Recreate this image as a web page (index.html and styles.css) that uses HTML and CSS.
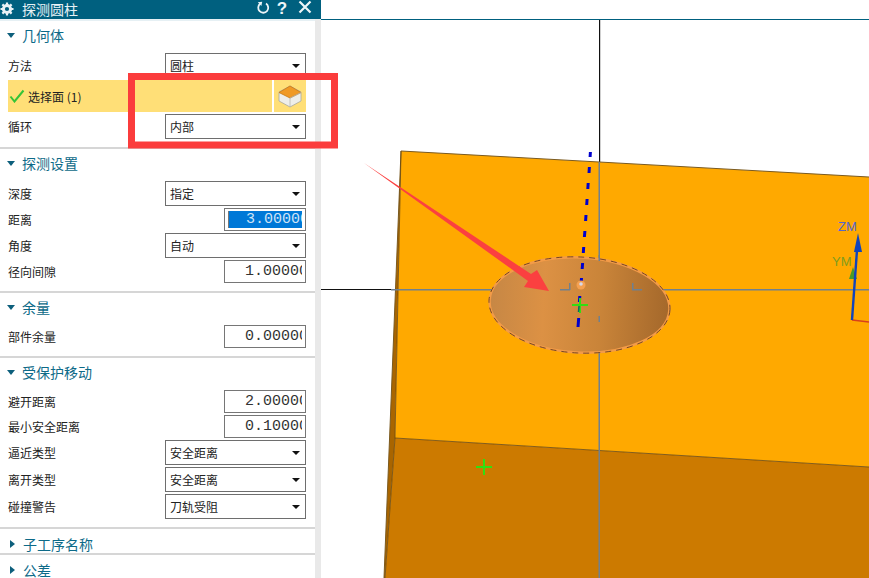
FILE: index.html
```html
<!DOCTYPE html>
<html lang="zh">
<head>
<meta charset="utf-8">
<title>探测圆柱</title>
<link rel="stylesheet" href="styles.css">
</head>
<body>
<div class="app">
  <aside class="panel">
    <header class="titlebar">
      <svg class="gear" viewBox="0 0 14 14" width="14" height="14">
        <circle cx="7" cy="7" r="3.6" fill="none" stroke="#e8f2f6" stroke-width="3"/>
        <path d="M7 0.5V3M7 11V13.5M0.5 7H3M11 7H13.5M2.4 2.4L4.2 4.2M9.8 9.8L11.6 11.6M2.4 11.6L4.2 9.8M9.8 4.2L11.6 2.4" stroke="#e8f2f6" stroke-width="2.2"/>
      </svg>
      <span class="title-text">探测圆柱</span>
      <svg class="tb-icon" viewBox="0 0 14 14" width="14" height="14">
        <path d="M4.2 2.8A5 5 0 1 0 10 2.6" fill="none" stroke="#eef5f8" stroke-width="1.8"/>
        <path d="M1.8 1.2L6.2 0.8L5.4 5Z" fill="#eef5f8"/>
      </svg>
      <span class="tb-help">?</span>
      <svg class="tb-close" viewBox="0 0 14 14" width="14" height="14">
        <path d="M1.5 1.5L12.5 12.5M12.5 1.5L1.5 12.5" stroke="#eef5f8" stroke-width="2.2"/>
      </svg>
    </header>
    <div class="sheet">
      <section class="group group-first">
        <h2 class="group-head"><i class="caret-down"></i>几何体</h2>
        <div class="rows">
          <div class="row"><span class="label">方法</span><div class="select">圆柱<i class="arrow"></i></div></div>
          <div class="row-pick">
            <div class="pick-main">
              <svg class="check" viewBox="0 0 16 14" width="16" height="14"><path d="M1.5 7.5L5.5 12.5L14.5 1.5" fill="none" stroke="#35c437" stroke-width="2"/></svg>
              <span class="pick-text">选择面 (1)</span>
            </div>
            <div class="pick-btn">
              <svg viewBox="0 0 24 24" width="24" height="24">
                <path d="M12 2L23 8V17L12 23L1 17V8Z" fill="#eeeeea" stroke="#a8a8a0" stroke-width="0.8"/>
                <path d="M12 2L23 8.5L12 14L1 8.5Z" fill="#f09a26" stroke="#c87810" stroke-width="0.8"/>
                <path d="M12 14V23M12 14L23 8.5" stroke="#b8b8b0" stroke-width="0.8" fill="none"/>
              </svg>
            </div>
          </div>
          <div class="row"><span class="label">循环</span><div class="select">内部<i class="arrow"></i></div></div>
        </div>
      </section>
      <section class="group">
        <h2 class="group-head"><i class="caret-down"></i>探测设置</h2>
        <div class="rows">
          <div class="row"><span class="label">深度</span><div class="select">指定<i class="arrow"></i></div></div>
          <div class="row row-input"><span class="label">距离</span><div class="num num-active"><span>3.00000</span></div></div>
          <div class="row"><span class="label">角度</span><div class="select">自动<i class="arrow"></i></div></div>
          <div class="row row-input"><span class="label">径向间隙</span><div class="num"><span>1.00000</span></div></div>
        </div>
      </section>
      <section class="group">
        <h2 class="group-head"><i class="caret-down"></i>余量</h2>
        <div class="rows">
          <div class="row row-input"><span class="label">部件余量</span><div class="num"><span>0.00000</span></div></div>
        </div>
      </section>
      <section class="group">
        <h2 class="group-head"><i class="caret-down"></i>受保护移动</h2>
        <div class="rows">
          <div class="row row-input"><span class="label">避开距离</span><div class="num"><span>2.00000</span></div></div>
          <div class="row row-input"><span class="label">最小安全距离</span><div class="num"><span>0.10000</span></div></div>
          <div class="row"><span class="label">逼近类型</span><div class="select">安全距离<i class="arrow"></i></div></div>
          <div class="row"><span class="label">离开类型</span><div class="select">安全距离<i class="arrow"></i></div></div>
          <div class="row"><span class="label">碰撞警告</span><div class="select">刀轨受阻<i class="arrow"></i></div></div>
        </div>
      </section>
      <section class="group group-closed">
        <h2 class="group-head"><i class="caret-right"></i>子工序名称</h2>
      </section>
      <section class="group group-closed">
        <h2 class="group-head"><i class="caret-right"></i>公差</h2>
      </section>
    </div>
  </aside>
  <main class="viewport">
    <svg class="scene" viewBox="321 0 548 578" width="548" height="578">
      <defs>
        <linearGradient id="hole" x1="0" x2="1" y1="0" y2="0">
          <stop offset="0" stop-color="#c68745"/>
          <stop offset="0.3" stop-color="#dc9144"/>
          <stop offset="0.62" stop-color="#c98439"/>
          <stop offset="1" stop-color="#a4682b"/>
        </linearGradient>
      </defs>
      <rect x="321" y="19" width="548" height="1" fill="#00607f"/>
      <rect x="321" y="289" width="71" height="1" fill="#111"/>
      <rect x="599" y="20" width="1.2" height="143" fill="#111"/>
      <polygon points="401,151 395,438 385,578 384,578" fill="#a96500"/>
      <polygon points="401,151 869,177 869,467 395,438" fill="#ffa900"/>
      <polygon points="395,438 869,467 869,578 385,578" fill="#cc7a00"/>
      <path d="M384 578L401 151L869 177" fill="none" stroke="#7a5a20" stroke-width="1"/>
      <path d="M401 151L395 438L385 578M395 438L869 467" fill="none" stroke="#6a4a10" stroke-width="0.8"/>
      <rect class="guide" x="391" y="289" width="179" height="1.5"/>
      <rect class="guide" x="632" y="289" width="237" height="1.5"/>
      <rect class="guide" x="598.5" y="162" width="1.5" height="96"/>
      <rect class="guide" x="598.5" y="320" width="1.5" height="258"/>
      <g transform="rotate(3 579.5 305)">
        <ellipse cx="579.5" cy="305" rx="90" ry="47.5" fill="url(#hole)" stroke="#f39b48" stroke-width="2.4"/>
        <ellipse cx="579.5" cy="305" rx="90.6" ry="48" fill="none" stroke="#5a3418" stroke-width="0.8" stroke-dasharray="6 5"/>
      </g>
      <rect class="guide" x="598.5" y="255" width="1.5" height="6"/>
      <rect class="guide" x="598.5" y="316" width="1.5" height="6"/>
      <rect class="guide" x="569" y="283" width="1.5" height="7"/>
      <rect class="guide" x="632" y="283" width="1.5" height="7"/>
      <rect class="guide" x="560" y="289" width="10" height="1.5"/>
      <rect class="guide" x="632" y="289" width="10" height="1.5"/>
      <path d="M590.4 152L590.1 157M589.4 167L589 173M588.2 183L587.8 189M587.1 199L586.7 205M586 215L585.6 221M584.9 231L584.4 237M583.7 247L583.3 253M582.6 263L582.2 269M581.5 278L581.1 284M579.8 296L579.4 302M578.7 318L578 327" fill="none" stroke="#0000cc" stroke-width="3"/>
      <circle cx="581" cy="285" r="4.5" fill="#f4a050"/>
      <circle cx="581" cy="284" r="1.8" fill="#d8d8e8"/>
      <path d="M572 305H588M580 298V313" stroke="#33dd11" stroke-width="2"/>
      <line x1="579" y1="306" x2="578.5" y2="312" stroke="#0d6a60" stroke-width="1.5"/>
      <path d="M476 467H492M484 459V475" stroke="#33dd11" stroke-width="2"/>
      <line x1="852" y1="320" x2="869" y2="322" stroke="#d8401c" stroke-width="1.5"/>
      <path d="M853 267L849 279H857Z" fill="#4a9a28"/>
      <line x1="852" y1="320" x2="857" y2="250" stroke="#1144bb" stroke-width="2.4"/>
      <path d="M858 233L854 252H862Z" fill="#1144bb"/>
      <text class="axis axis-z" x="838" y="231">ZM</text>
      <text class="axis axis-y" x="832" y="266">YM</text>
    </svg>
  </main>
  <svg class="markup" viewBox="0 0 869 578" width="869" height="578">
    <rect x="131.5" y="76.5" width="203" height="68.5" fill="none" stroke="#fb3c3c" stroke-width="7"/>
    <polygon points="364,163 531,274 537,270 549,291 524,287 528,281" fill="#fb4040"/>
  </svg>
</div>
</body>
</html>
```
FILE: styles.css
```css
* { box-sizing: border-box; }
html, body { margin: 0; padding: 0; height: 100%; overflow: hidden; background: #fff; }
body { font-family: "Noto Sans CJK SC", "Liberation Sans", sans-serif; font-size: 12px; color: #222; }

.app { position: relative; display: flex; width: 869px; height: 578px; overflow: hidden; }

.panel { flex: 0 0 321px; height: 578px; display: flex; flex-direction: column; background: #e9e9e9; overflow: hidden; }
.titlebar { flex: 0 0 19px; height: 19px; display: flex; align-items: center; background: #00607f; color: #e8f2f6; padding-left: 0; }
.gear { flex: none; margin-top: -2px; }
.title-text { margin-left: 8px; font-size: 14px; line-height: 19px; flex: 1; }
.tb-icon { flex: none; margin-right: 5px; margin-top: -3px; }
.tb-help { flex: none; width: 14px; text-align: center; font: bold 17px/19px "Liberation Sans", sans-serif; color: #eef5f8; margin-right: 9px; margin-top: -2px; }
.tb-close { flex: none; margin-right: 9px; margin-top: -5px; }

.sheet { width: 315px; background: #fff; border-top: 2px solid #e6f0f4; }
.group { padding-bottom: 8px; border-bottom: 2px solid #d6d6d6; background: #fff; }
.group-closed { padding-bottom: 0; }
.group-head { margin: 0; height: 32px; display: flex; align-items: center; font-size: 14px; font-weight: 400; color: #0d6a88; line-height: 24px; padding: 0 0 4px 7px; }
.group-closed .group-head { height: 24px; padding: 5px 0 0 7px; }
.caret-down { width: 0; height: 0; border-left: 4.5px solid transparent; border-right: 4.5px solid transparent; border-top: 5px solid #0d5f7c; margin-right: 7px; }
.caret-right { width: 0; height: 0; border-top: 4.5px solid transparent; border-bottom: 4.5px solid transparent; border-left: 5px solid #0d5f7c; margin: 0 8px 0 3px; }

.rows { display: flex; flex-direction: column; gap: 2px; }
.row { height: 25px; display: flex; align-items: center; justify-content: space-between; padding: 0 9px 0 8px; }
.row-input { height: 23px; }
.label { font-size: 12px; line-height: 16px; color: #222; }

.select { position: relative; width: 141px; height: 25px; border: 1px solid #6e6e6e; background: #fff; padding-left: 4px; line-height: 23px; font-size: 12px; color: #222; }
.arrow { position: absolute; right: 5px; top: 10px; width: 0; height: 0; border-left: 4px solid transparent; border-right: 4px solid transparent; border-top: 4px solid #111; }

.num { width: 82px; height: 23px; border: 1px solid #767676; background: #fff; overflow: hidden; white-space: nowrap; font: 15px/22px "Liberation Mono", monospace; color: #333; padding: 0 3px 0 20px; }
.num span { display: block; overflow: hidden; }
.num-active { padding: 2px 3px; }
.num-active span { background: #0078d7; color: #cfe4f6; line-height: 17px; padding-left: 17px; height: 17px; border-left: 1px solid #777; }

.row-pick { height: 32px; display: flex; margin: 0 9px 0 8px; background: #ffdf77; }
.pick-main { flex: 1; display: flex; align-items: center; padding-left: 1px; border-right: 2px solid #fff; }
.check { flex: none; }
.pick-text { margin-left: 3px; font-size: 12px; color: #222; }
.pick-btn { flex: 0 0 32px; display: flex; align-items: center; justify-content: center; }

.viewport { flex: 1; background: #fff; overflow: hidden; }
.scene { display: block; }
.guide { fill: #6f8090; }
.axis { font: 13px "Liberation Sans", sans-serif; }
.axis-z { fill: #5566cc; }
.axis-y { fill: #7f9c1e; }

.markup { position: absolute; left: 0; top: 0; pointer-events: none; }
```
